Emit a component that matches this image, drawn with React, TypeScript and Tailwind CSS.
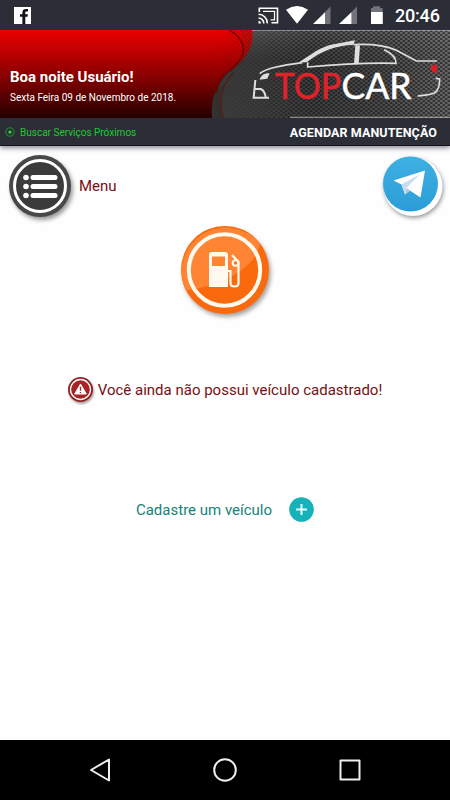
import type { ReactNode } from "react";

const StatusBar = () => (
  <div className="flex h-[30px] items-center justify-between bg-[#2b2e37] pl-[14px] pr-[10px] text-white">
    <svg width="17" height="17" viewBox="0 0 17 17">
      <path fill="#fff" d="M0 0h17v17H0z" />
      <path fill="#111319" d="M8.4 17V9.8H6V7.2h2.4V5.400C8.400 3.200 9.800 2 12 2h2v2.500h-1.400c-1 0-1.300.5-1.300 1.300v1.400h2.600l-.4 2.600h-2.200V17z" />
    </svg>
    <div className="flex items-center">
      <svg className="shrink-0" width="130" height="30" viewBox="255 0 130 30">
        {/* cast */}
        <g fill="none" stroke="#fff" strokeWidth="1.6">
          <path d="M259.300 12V8.300h18.200v14.500H271.500" />
          <path d="M258.500 14.300a8.800 8.800 0 0 1 8.800 9.100M258.500 18a5.300 5.300 0 0 1 5.300 5.400" />
          <path strokeWidth="1.200" d="M263 11.300h11.500v8.500h-4" />
        </g>
        <path fill="#fff" d="M258.500 20.800a2.700 2.700 0 0 1 2.600 2.600h-2.600z" />
        {/* wifi */}
        <path fill="#fff" d="M286 9.7q11-7.3 22 0L297 23.8z" />
        {/* signal */}
        <path fill="#70737a" d="M330.5 6.5V24h-7.2V13.8zM357 6.5V24h-7.2V13.8z" />
        <path fill="#fff" d="M313 24l12-11.800V24zM339 24l12.400-11.800V24z" />
        {/* battery */}
        <path fill="#70737a" d="M373 6.3h7V8h2.6v5H371V8h2z" />
        <path fill="#fff" d="M371 12h11.8v12H371z" />
      </svg>
      <span className="ml-[10px] w-[45px] whitespace-nowrap text-[18px] font-medium tracking-[-0.2px]">20:46</span>
    </div>
  </div>
);

const BannerArt = () => (
  <svg className="absolute inset-0" width="450" height="88" viewBox="0 0 450 88">
    <defs>
      <linearGradient id="red" x2="0" y2="1">
        <stop stopColor="#ec0000" />
        <stop offset=".5" stopColor="#8d0000" />
        <stop offset="1" stopColor="#250000" />
      </linearGradient>
      <linearGradient id="redEdge" x2="0" y2="1">
        <stop stopColor="#cf0a08" />
        <stop offset="1" stopColor="#7a0806" />
      </linearGradient>
      <linearGradient id="steel">
        <stop offset=".45" stopColor="#333" />
        <stop offset=".7" stopColor="#383838" />
        <stop offset=".88" stopColor="#4c4c4c" />
        <stop offset="1" stopColor="#686868" />
      </linearGradient>
      <linearGradient id="shade" x2="0" y2="1">
        <stop stopColor="#888" stopOpacity=".4" />
        <stop offset=".35" stopColor="#555" stopOpacity=".1" />
        <stop offset="1" stopColor="#555" stopOpacity=".2" />
      </linearGradient>
      <pattern id="mesh" width="5" height="4" patternUnits="userSpaceOnUse">
        <ellipse cx="1.25" cy="1" rx="1.35" ry=".85" fill="#141414" />
        <ellipse cx="3.75" cy="3" rx="1.35" ry=".85" fill="#141414" />
      </pattern>
      <linearGradient id="meshFade">
        <stop offset=".48" stopColor="#fff" stopOpacity="0" />
        <stop offset=".57" stopColor="#fff" stopOpacity=".3" />
        <stop offset=".68" stopColor="#fff" stopOpacity=".85" />
      </linearGradient>
      <mask id="meshMask">
        <rect width="450" height="88" fill="url(#meshFade)" />
      </mask>
    </defs>
    <rect width="450" height="88" fill="url(#steel)" />
    <rect width="450" height="88" fill="url(#shade)" />
    <path d="M225 0H252C255 12 248 25 240 33L230 42z" fill="url(#redEdge)" />
    <path d="M0 0H238C247 12 247 23 238 33C225 44 217 53 215 66C213 76 212 82 213 88H0z" fill="url(#red)" />
    <path d="M216 60C212 68 211 79 212 88H224C219 77 218 67 223 55z" fill="#34302e" />
    <path d="M229 0C244 8 247 20 239 31C231 42 219 45 216 64" fill="none" stroke="#5b0b07" strokeOpacity=".8" strokeWidth="1.6" />
    <path d="M233 43C221 56 218 70 223 88" fill="none" stroke="#51201b" strokeWidth="1.6" />
    <rect x="215" width="235" height="88" fill="url(#mesh)" mask="url(#meshMask)" />
    <path d="M252 .5H450" stroke="#bbb" strokeOpacity=".55" />
    <path d="M290 87.3H450" stroke="#ddd" strokeOpacity=".65" />

    {/* car outline */}
    <g transform="translate(225 -30) scale(.33333)" fill="none" stroke="#dedede" strokeWidth="5">
      <path d="M104 221C122 204 175 196 232 188" />
      <path fill="#dedede" stroke="none" d="M222 187C260 163 287 140 326 133L390 121L385 134C335 137 291 150 245 187z" />
      <path d="M385 134C440 131 480 136 514 151L574 183H636" />
      <path d="M248 187V201C335 193 430 188 513 190C514 174 501 160 477 149" />
      <path strokeWidth="14" d="M398 136L394 192" />
      <path fill="#dedede" stroke="none" d="M104 239C109 225 118 219 134 220L127 236z" />
      <path strokeWidth="6" d="M91 240L86 293H132M89 267H107C117 271 121 281 122 293" />
      <path d="M632 235L644 237C644 257 641 272 628 279C615 285 596 286 578 288" />
      <path fill="#e61b22" stroke="none" d="M617 199L635 192V220L621 215z" />
    </g>
    <g fontFamily="Lato, sans-serif" fontSize="37.5" strokeWidth=".5">
      <text x="275" y="69.300" textLength="66" lengthAdjust="spacingAndGlyphs" fill="#e2222a" stroke="#e2222a">TOP</text>
      <text x="341.500" y="69.300" textLength="70" lengthAdjust="spacingAndGlyphs" fill="#fff" stroke="#fff">CAR</text>
    </g>
  </svg>
);

const Header = () => (
  <header className="relative z-10 shadow-[0_2px_5px_rgba(60,50,80,0.6)]">
    <div className="relative h-[88px] overflow-hidden">
      <BannerArt />
      <div className="relative pl-[10px] pt-[37px] text-white">
        <h1 className="text-[15px] font-bold leading-[20px]">Boa noite Usuário!</h1>
        <p className="mt-[3px] text-[10px] leading-[16px]">Sexta Feira 09 de Novembro de 2018.</p>
      </div>
    </div>
    <div className="flex h-[28px] items-center justify-between border-b border-[#15131f] bg-[#2b2e37] pl-[5px] pr-[13px]">
      <div className="flex items-center gap-[5px] pt-px text-[10px] text-[#20c92b]">
        <svg width="10" height="10" viewBox="0 0 10 10">
          <circle cx="5" cy="5" r="4.2" fill="none" stroke="#179f27" />
          <circle cx="5" cy="5" r="1.6" fill="#35dd3e" />
        </svg>
        Buscar Serviços Próximos
      </div>
      <span className="pt-[3px] text-[12.5px] font-bold tracking-[0.1px] text-white">AGENDAR MANUTENÇÃO</span>
    </div>
  </header>
);

const MenuIcon = () => (
  <svg className="drop-shadow-[2px_3px_2px_rgba(0,0,0,0.4)]" width="62" height="62" viewBox="0 0 62 62">
    <circle cx="31" cy="31" r="31" fill="#484848" />
    <circle cx="31" cy="31" r="25.5" fill="#3b3b3b" stroke="#fff" strokeWidth="3" />
    <g stroke="#fff" strokeWidth="5" strokeLinecap="round">
      <path d="M24 22.5H46M24 31.5H46M24 40.5H46" />
    </g>
    <g fill="#fff">
      <circle cx="17" cy="22.5" r="2.8" />
      <circle cx="17" cy="31.5" r="2.8" />
      <circle cx="17" cy="40.5" r="2.8" />
    </g>
  </svg>
);

const TelegramIcon = () => (
  <svg className="drop-shadow-[1px_2px_2px_rgba(0,0,0,0.4)]" width="60" height="60" viewBox="0 0 60 60">
    <defs>
      <linearGradient id="sky" x2="0" y2="1">
        <stop stopColor="#3fb0e3" />
        <stop offset="1" stopColor="#2a9dd7" />
      </linearGradient>
    </defs>
    <circle cx="30" cy="30.5" r="29.5" fill="#fff" />
    <circle cx="27.5" cy="28" r="27.5" fill="url(#sky)" />
    <path fill="#fff" d="M10.5 24.500L42 14.5L37.5 41.500L26 34L22 38.500L18.500 28.500z" />
    <path fill="#c9dcf0" d="M18.500 28.500L37 18L23.500 32L22 38.500z" />
    <path fill="#afc9e3" d="M22 38.500L23.500 32L27.500 34.800z" />
  </svg>
);

const FuelIcon = () => (
  <svg className="drop-shadow-[2px_3px_2px_rgba(0,0,0,0.35)]" width="88" height="88" viewBox="0 0 88 88">
    <circle cx="44" cy="44" r="44" fill="#fa6a0c" />
    <path fill="#ff8433" d="M5 64.500A44 44 0 0 1 79 18C75 40 45 59 5 64.500z" />
    <circle cx="43.500" cy="44" r="35.700" fill="none" stroke="#fffaf0" strokeWidth="4" />
    <path fill="#fffaf0" fillRule="evenodd" d="M28 29q0-3 3-3h13q3 0 3 3v32H28zM31 30.500v9.500h13v-9.500z" />
    <path fill="none" stroke="#fffaf0" strokeWidth="2.200" d="M46 45h3.500v12q0 3.500 4 3.500t4-3.500V36L51 29" />
    <circle cx="54.500" cy="37" r="2.800" fill="#ff7420" stroke="#fffaf0" strokeWidth="2" />
  </svg>
);

const AlertIcon = () => (
  <svg className="drop-shadow-[1px_2px_1px_rgba(0,0,0,0.35)]" width="25" height="25" viewBox="0 0 25 25">
    <circle cx="12.5" cy="12.500" r="12.500" fill="#942022" />
    <circle cx="12.500" cy="12.500" r="10" fill="#a82325" stroke="#fff" strokeWidth="1.300" />
    <path fill="#fff" stroke="#fff" strokeLinejoin="round" d="M12.500 7L18.300 17H6.700z" />
    <path stroke="#a82325" strokeWidth="1.400" d="M12.500 9.800v4M12.500 14.900v1.300" />
  </svg>
);

const AddIcon = () => (
  <svg width="25" height="25" viewBox="0 0 25 25">
    <circle cx="12.500" cy="12.500" r="12.300" fill="#16b2b9" />
    <path stroke="#e5ffff" strokeWidth="2" d="M7 12.500h11M12.500 7v11" />
  </svg>
);

const NavButton = ({ label, children }: { label: string; children: ReactNode }) => (
  <button aria-label={label} className="flex h-full w-[125px] items-center justify-center">
    <svg width="26" height="26" viewBox="0 0 26 26" fill="none" stroke="#eee" strokeWidth="2" strokeLinejoin="round">
      {children}
    </svg>
  </button>
);

const App = () => {
  return (
    <div className="flex h-[800px] w-[450px] flex-col overflow-hidden bg-[#fefefe] font-['Roboto',sans-serif]">
      <StatusBar />
      <Header />

      <main className="flex flex-1 flex-col items-center">
        {/* Shortcuts */}
        <div className="flex w-full items-start justify-between pl-[9px] pr-[7px] pt-[9px]">
          <button className="flex items-center gap-[8px] text-[15px] text-[#810b0f]">
            <MenuIcon />
            Menu
          </button>
          <button aria-label="Telegram" className="pt-px">
            <TelegramIcon />
          </button>
        </div>

        <div className="mt-[9px]">
          <FuelIcon />
        </div>

        {/* Empty state */}
        <div className="mt-[63px] flex items-center gap-[5px] text-[15px] text-[#760f12]">
          <AlertIcon />
          <span className="pt-[2px]">Você ainda não possui veículo cadastrado!</span>
        </div>

        <button className="mt-[95px] flex items-center gap-[17px] text-[15px] text-[#168477]">
          <span className="pt-[2px]">Cadastre um veículo</span>
          <AddIcon />
        </button>
      </main>

      <nav className="flex h-[60px] items-center justify-center bg-black">
        <NavButton label="Voltar">
          <path d="M22 2.5V23.500L4 13z" />
        </NavButton>
        <NavButton label="Início">
          <circle cx="13" cy="13" r="10.800" />
        </NavButton>
        <NavButton label="Recentes">
          <rect x="3.500" y="3.500" width="19" height="19" />
        </NavButton>
      </nav>
    </div>
  );
};

export default App;
